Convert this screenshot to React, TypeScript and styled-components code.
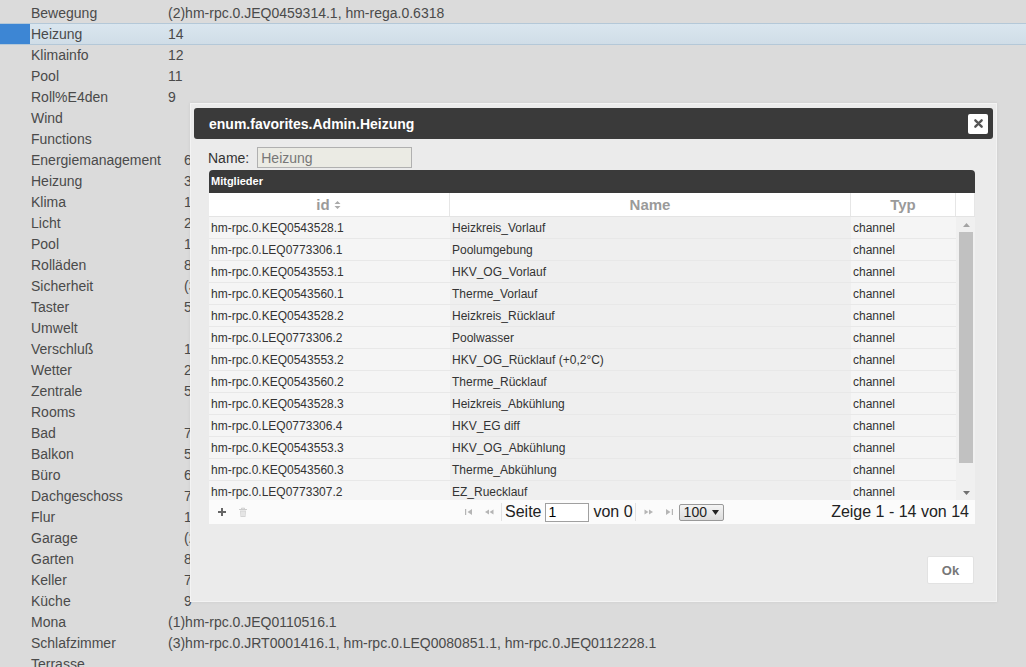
import React from "react";
import styled, { createGlobalStyle } from "styled-components";

type Entry = { name: string; value?: string; selected?: boolean; wide?: boolean };

const entries: Entry[] = [
  { name: "Bewegung", value: "(2)hm-rpc.0.JEQ0459314.1, hm-rega.0.6318" },
  { name: "Heizung", value: "14", selected: true },
  { name: "Klimainfo", value: "12" },
  { name: "Pool", value: "11" },
  { name: "Roll%E4den", value: "9" },
  { name: "Wind" },
  { name: "Functions" },
  { name: "Energiemanagement", value: "6", wide: true },
  { name: "Heizung", value: "3", wide: true },
  { name: "Klima", value: "1", wide: true },
  { name: "Licht", value: "2", wide: true },
  { name: "Pool", value: "1", wide: true },
  { name: "Rolläden", value: "8", wide: true },
  { name: "Sicherheit", value: "(3)hm-rpc.0.JEQ0112228.1", wide: true },
  { name: "Taster", value: "5", wide: true },
  { name: "Umwelt" },
  { name: "Verschluß", value: "1", wide: true },
  { name: "Wetter", value: "2", wide: true },
  { name: "Zentrale", value: "5", wide: true },
  { name: "Rooms" },
  { name: "Bad", value: "7", wide: true },
  { name: "Balkon", value: "5", wide: true },
  { name: "Büro", value: "6", wide: true },
  { name: "Dachgeschoss", value: "7", wide: true },
  { name: "Flur", value: "1", wide: true },
  { name: "Garage", value: "(2)hm-rpc.0.LEQ0080851.1", wide: true },
  { name: "Garten", value: "8", wide: true },
  { name: "Keller", value: "7", wide: true },
  { name: "Küche", value: "9", wide: true },
  { name: "Mona", value: "(1)hm-rpc.0.JEQ0110516.1" },
  { name: "Schlafzimmer", value: "(3)hm-rpc.0.JRT0001416.1, hm-rpc.0.LEQ0080851.1, hm-rpc.0.JEQ0112228.1" },
  { name: "Terrasse" },
];

const members: [string, string][] = [
  ["hm-rpc.0.KEQ0543528.1", "Heizkreis_Vorlauf"],
  ["hm-rpc.0.LEQ0773306.1", "Poolumgebung"],
  ["hm-rpc.0.KEQ0543553.1", "HKV_OG_Vorlauf"],
  ["hm-rpc.0.KEQ0543560.1", "Therme_Vorlauf"],
  ["hm-rpc.0.KEQ0543528.2", "Heizkreis_Rücklauf"],
  ["hm-rpc.0.LEQ0773306.2", "Poolwasser"],
  ["hm-rpc.0.KEQ0543553.2", "HKV_OG_Rücklauf (+0,2°C)"],
  ["hm-rpc.0.KEQ0543560.2", "Therme_Rücklauf"],
  ["hm-rpc.0.KEQ0543528.3", "Heizkreis_Abkühlung"],
  ["hm-rpc.0.LEQ0773306.4", "HKV_EG diff"],
  ["hm-rpc.0.KEQ0543553.3", "HKV_OG_Abkühlung"],
  ["hm-rpc.0.KEQ0543560.3", "Therme_Abkühlung"],
  ["hm-rpc.0.LEQ0773307.2", "EZ_Ruecklauf"],
  ["hm-rpc.0.LEQ0773307.3", "EZ_Vorlauf"],
];

function PagerIcon({ kind }: { kind: "first" | "prev" | "next" | "last" }) {
  const c = "#b5b5b5";
  return (
    <svg width="10" height="8" viewBox="0 0 10 8">
      {kind === "first" && (
        <>
          <rect x="1" y="1" width="1.2" height="6" fill={c} />
          <path d="M8 1 L3.5 4 L8 7 Z" fill={c} />
        </>
      )}
      {kind === "prev" && (
        <>
          <path d="M5 1.5 L1 4 L5 6.5 Z" fill={c} />
          <path d="M9.5 1.5 L5.5 4 L9.5 6.5 Z" fill={c} />
        </>
      )}
      {kind === "next" && (
        <>
          <path d="M0.5 1.5 L4.5 4 L0.5 6.5 Z" fill={c} />
          <path d="M5 1.5 L9 4 L5 6.5 Z" fill={c} />
        </>
      )}
      {kind === "last" && (
        <>
          <path d="M2 1 L6.5 4 L2 7 Z" fill={c} />
          <rect x="7.8" y="1" width="1.2" height="6" fill={c} />
        </>
      )}
    </svg>
  );
}

export default function App() {
  return (
    <>
      <GlobalStyle />
      <Page>
        <List>
          {entries.map((e, i) => (
            <ListRow key={i} $selected={e.selected}>
              <Marker $selected={e.selected} />
              <ListName $wide={e.wide}>{e.name}</ListName>
              <ListValue>{e.value}</ListValue>
            </ListRow>
          ))}
        </List>

        <Dialog>
          <TitleBar>
            <Title>enum.favorites.Admin.Heizung</Title>
            <CloseButton>
              <svg width="9" height="9" viewBox="0 0 10 10">
                <path d="M1.5 1.5 L8.5 8.5 M8.5 1.5 L1.5 8.5" stroke="#555" strokeWidth="2.6" strokeLinecap="round" />
              </svg>
            </CloseButton>
          </TitleBar>

          <NameRow>
            <NameLabel>Name:</NameLabel>
            <NameInput value="Heizung" readOnly />
          </NameRow>

          <Grid>
            <Caption>Mitglieder</Caption>
            <HeaderRow>
              <HeadCell $w={241}>
                id
                <svg width="9" height="10" viewBox="0 0 9 10" style={{ marginLeft: 3 }}>
                  <path d="M1.5 4 L4.5 1 L7.5 4 Z M1.5 6 L4.5 9 L7.5 6 Z" fill="#aaa" />
                </svg>
              </HeadCell>
              <HeadCell $w={401}>Name</HeadCell>
              <HeadCell $w={105}>Typ</HeadCell>
              <HeadCell $w={19} />
            </HeaderRow>
            <Body>
              <Rows>
                {members.map(([id, name]) => (
                  <Row key={id}>
                    <Cell $w={241}>{id}</Cell>
                    <Cell $w={401} $shade>{name}</Cell>
                    <Cell $w={105}>channel</Cell>
                  </Row>
                ))}
              </Rows>
              <Scrollbar>
                <Arrow>
                  <svg width="7" height="4" viewBox="0 0 7 4"><path d="M0 4 L3.5 0 L7 4 Z" fill="#a3a3a3" /></svg>
                </Arrow>
                <Thumb />
                <Arrow>
                  <svg width="7" height="4" viewBox="0 0 7 4"><path d="M0 0 L3.5 4 L7 0 Z" fill="#707070" /></svg>
                </Arrow>
              </Scrollbar>
            </Body>
            <Pager>
              <PagerLeft>
                <ToolIcon>
                  <svg width="10" height="10" viewBox="0 0 10 10">
                    <path d="M5 1 V9 M1 5 H9" stroke="#666" strokeWidth="2" />
                  </svg>
                </ToolIcon>
                <ToolIcon>
                  <svg width="10" height="11" viewBox="0 0 10 11">
                    <path d="M1 2.5 H9 M3.5 2.5 V1.2 H6.5 V2.5" stroke="#ccc" strokeWidth="1" fill="none" />
                    <path d="M2 3.5 H8 L7.5 10 H2.5 Z" fill="#d4d4d4" />
                    <path d="M4 4.5 V9 M6 4.5 V9" stroke="#fff" strokeWidth="0.8" />
                  </svg>
                </ToolIcon>
              </PagerLeft>
              <PagerCenter>
                <PagerButton><PagerIcon kind="first" /></PagerButton>
                <PagerButton><PagerIcon kind="prev" /></PagerButton>
                <Separator />
                <PagerText>Seite</PagerText>
                <PageInput value="1" readOnly />
                <PagerText>von 0</PagerText>
                <Separator />
                <PagerButton><PagerIcon kind="next" /></PagerButton>
                <PagerButton><PagerIcon kind="last" /></PagerButton>
                <PageSize>
                  100
                  <svg width="7" height="5" viewBox="0 0 7 5"><path d="M0 0 L3.5 5 L7 0 Z" fill="#222" /></svg>
                </PageSize>
              </PagerCenter>
              <PagerInfo>Zeige 1 - 14 von 14</PagerInfo>
            </Pager>
          </Grid>

          <ButtonBar>
            <OkButton>Ok</OkButton>
          </ButtonBar>
        </Dialog>
      </Page>
    </>
  );
}

const GlobalStyle = createGlobalStyle`
  html, body {
    margin: 0;
    padding: 0;
    background: #dbdbdb;
    overflow: hidden;
  }
  body {
    font-family: "Liberation Sans", Arial, sans-serif;
  }
`;

const Page = styled.div`
  position: relative;
  width: 1026px;
  height: 667px;
  overflow: hidden;
  background: #dbdbdb;
`;

const List = styled.div`
  display: flex;
  flex-direction: column;
  padding-top: 2px;
`;

const ListRow = styled.div<{ $selected?: boolean }>`
  display: flex;
  align-items: center;
  height: 20px;
  border-top: 1px solid ${(p) => (p.$selected ? "#b4c8d8" : "transparent")};
  border-bottom: ${(p) => (p.$selected ? "1px solid #b4c8d8" : "0")};
  margin-bottom: ${(p) => (p.$selected ? "-1px" : "0")};
  background: ${(p) => (p.$selected ? "linear-gradient(#dae6ef, #d0dde7)" : "transparent")};
  font-size: 14px;
  line-height: 20px;
  color: #4a4a4a;
  white-space: nowrap;
`;

const Marker = styled.div<{ $selected?: boolean }>`
  width: 30px;
  height: 100%;
  margin-right: 1px;
  background: ${(p) => (p.$selected ? "#3d86d4" : "transparent")};
`;

const ListName = styled.span<{ $wide?: boolean }>`
  flex: 0 0 ${(p) => (p.$wide ? 153 : 137)}px;
`;

const ListValue = styled.span``;

const Dialog = styled.div`
  position: absolute;
  left: 190px;
  top: 103px;
  width: 807px;
  height: 499px;
  background: #ebebeb;
  border: 1px solid #f3f3f3;
  box-shadow: 0 0 3px rgba(0, 0, 0, 0.08);
  display: flex;
  flex-direction: column;
  padding: 4px 3px 0 3px;
  box-sizing: border-box;
`;

const TitleBar = styled.div`
  display: flex;
  align-items: center;
  justify-content: space-between;
  height: 31px;
  padding: 0 5px 0 15px;
  background: #3a3a3a;
  border-radius: 3px;
`;

const Title = styled.span`
  color: #fff;
  font-weight: bold;
  font-size: 14px;
`;

const CloseButton = styled.div`
  display: flex;
  align-items: center;
  justify-content: center;
  width: 20px;
  height: 20px;
  background: #fff;
  border-radius: 2px;
`;

const NameRow = styled.div`
  display: flex;
  align-items: center;
  gap: 8px;
  margin: 8px 0 2px 14px;
`;

const NameLabel = styled.span`
  font-size: 14px;
  color: #333;
`;

const NameInput = styled.input`
  width: 155px;
  height: 21px;
  box-sizing: border-box;
  border: 1px solid #b0b0b0;
  background: #ebebe4;
  color: #777;
  font-family: "Liberation Sans", Arial, sans-serif;
  font-size: 14px;
  padding: 0 3px;
  outline: none;
`;

const Grid = styled.div`
  margin-left: 15px;
  width: 766px;
  display: flex;
  flex-direction: column;
`;

const Caption = styled.div`
  height: 23px;
  line-height: 23px;
  background: #3a3a3a;
  border-radius: 4px 4px 0 0;
  color: #fff;
  font-weight: bold;
  font-size: 11px;
  padding-left: 2px;
`;

const HeaderRow = styled.div`
  display: flex;
  height: 23px;
  background: #fff;
  border-bottom: 1px solid #e4e4e4;
`;

const HeadCell = styled.div<{ $w: number }>`
  display: flex;
  align-items: center;
  justify-content: center;
  width: ${(p) => p.$w}px;
  box-sizing: border-box;
  border-right: 1px solid #e6e6e6;
  color: #9a9a9a;
  font-weight: bold;
  font-size: 15px;
`;

const Body = styled.div`
  display: flex;
  height: 283px;
  background: #f4f4f4;
  overflow: hidden;
`;

const Rows = styled.div`
  flex: 1;
  display: flex;
  flex-direction: column;
  overflow: hidden;
`;

const Row = styled.div`
  display: flex;
  flex: 0 0 22px;
  border-bottom: 1px solid #e8e8e8;
  box-sizing: border-box;
`;

const Cell = styled.div<{ $w: number; $shade?: boolean }>`
  width: ${(p) => p.$w}px;
  display: flex;
  align-items: center;
  padding-left: 2px;
  box-sizing: border-box;
  font-size: 12px;
  color: #333;
  background: ${(p) => (p.$shade ? "#efefef" : "#f5f5f5")};
  white-space: nowrap;
`;

const Scrollbar = styled.div`
  width: 19px;
  display: flex;
  flex-direction: column;
  align-items: center;
  background: #f0f0f0;
  padding: 0 2px 0 3px;
  box-sizing: border-box;
`;

const Arrow = styled.div`
  height: 15px;
  display: flex;
  align-items: center;
  justify-content: center;
`;

const Thumb = styled.div`
  width: 100%;
  flex: 1;
  margin: 0 0 22px;
  background: #c1c1c1;
`;

const Pager = styled.div`
  display: flex;
  align-items: center;
  height: 24px;
  background: #fbfbfb;
`;

const PagerLeft = styled.div`
  display: flex;
  align-items: center;
  gap: 11px;
  width: 242px;
  padding-left: 8px;
`;

const ToolIcon = styled.span`
  display: flex;
  align-items: center;
`;

const PagerCenter = styled.div`
  display: flex;
  align-items: center;
`;

const PagerButton = styled.span`
  display: flex;
  align-items: center;
  justify-content: center;
  width: 20px;
`;

const Separator = styled.span`
  width: 1px;
  height: 18px;
  background: #e2e2e2;
  margin: 0 3px 0 2px;
`;

const PagerText = styled.span`
  font-size: 16px;
  line-height: 20px;
  color: #222;
`;

const PageInput = styled.input`
  width: 44px;
  height: 19px;
  box-sizing: border-box;
  border: 1px solid #a0a0a0;
  font-family: "Liberation Sans", Arial, sans-serif;
  font-size: 14px;
  padding: 0 2px;
  margin: 0 4px 0 4px;
  outline: none;
  background: #fff;
`;

const PageSize = styled.span`
  display: flex;
  align-items: center;
  gap: 5px;
  height: 17px;
  box-sizing: border-box;
  margin-left: 0;
  padding: 0 4px;
  border: 1px solid #999;
  border-radius: 2px;
  background: linear-gradient(#f4f4f4, #dcdcdc);
  font-size: 14px;
  color: #222;
`;

const PagerInfo = styled.span`
  margin-left: auto;
  padding-right: 6px;
  font-size: 16px;
  line-height: 20px;
  color: #222;
`;

const ButtonBar = styled.div`
  display: flex;
  justify-content: flex-end;
  margin-top: 32px;
  padding-right: 19px;
`;

const OkButton = styled.div`
  display: flex;
  align-items: center;
  justify-content: center;
  width: 47px;
  height: 28px;
  background: #fff;
  border: 1px solid #e2e2e2;
  border-radius: 2px;
  box-sizing: border-box;
  color: #777;
  font-weight: bold;
  font-size: 13px;
`;
